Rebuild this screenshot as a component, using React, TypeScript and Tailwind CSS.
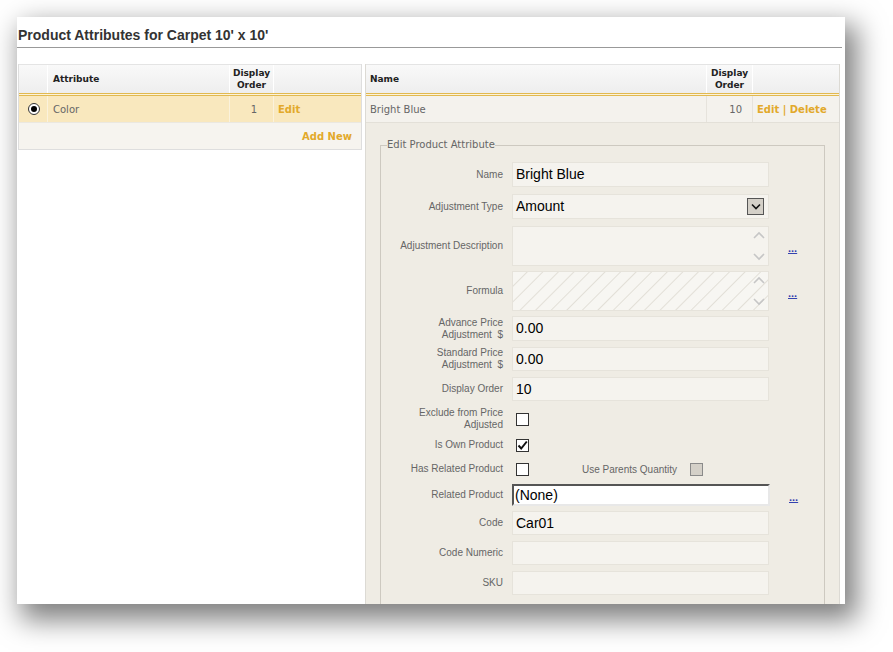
import React from "react";

const tableFont = "font-['DejaVu_Sans',Verdana,sans-serif]";
const formFont = "font-['Liberation_Sans',Arial,sans-serif]";

function Chevron({ dir }: { dir: "up" | "down" }) {
  return (
    <svg width="12" height="8" viewBox="0 0 12 8" fill="none" stroke="#c6c6c6" strokeWidth="1.6">
      {dir === "up" ? <path d="M1 7 L6 2 L11 7" /> : <path d="M1 1 L6 6 L11 1" />}
    </svg>
  );
}

function TextBox({ value, h = "h-[25px]" }: { value?: string; h?: string }) {
  return (
    <div
      className={`${h} w-[257px] bg-[#f5f3ee] border border-[#e6e3db] flex items-center pl-[3px] text-[14px] text-black ${formFont}`}
    >
      {value}
    </div>
  );
}

function TextArea({ hatched }: { hatched?: boolean }) {
  return (
    <div
      className={`h-[40px] w-[257px] border border-[#e6e3db] flex justify-end ${
        hatched
          ? "bg-[repeating-linear-gradient(135deg,#f7f6f2_0px,#f7f6f2_9px,#e2dfd7_10px,#f7f6f2_11px)]"
          : "bg-[#f5f3ee]"
      }`}
    >
      <div className="flex flex-col justify-between py-[4px] pr-[3px]">
        <Chevron dir="up" />
        <Chevron dir="down" />
      </div>
    </div>
  );
}

function Checkbox({ checked, disabled }: { checked?: boolean; disabled?: boolean }) {
  return (
    <div
      className={`w-[13px] h-[13px] border flex items-center justify-center ${
        disabled ? "bg-[#d4d0c8] border-[#8a8a8a]" : "bg-white border-[#333]"
      }`}
    >
      {checked && (
        <svg width="11" height="11" viewBox="0 0 11 11" fill="none" stroke="#111" strokeWidth="2">
          <path d="M1.5 5.5 L4.2 8.5 L9.8 1.5" />
        </svg>
      )}
    </div>
  );
}

function Dots() {
  return (
    <span className={`ml-[19px] mt-[4px] text-[11px] font-bold leading-none text-[#3443b0] underline ${formFont}`}>
      ...
    </span>
  );
}

function FormRow({
  label,
  mt,
  h,
  children,
  extra,
}: {
  label: React.ReactNode;
  mt: string;
  h: string;
  children: React.ReactNode;
  extra?: React.ReactNode;
}) {
  return (
    <div className={`flex items-center ${mt} ${h}`}>
      <div className={`w-[122px] text-right text-[10px] leading-[12px] text-[#666] ${formFont}`}>{label}</div>
      <div className="ml-[9px] flex items-center">{children}</div>
      {extra}
    </div>
  );
}

export default function App() {
  return (
    <div className="w-[893px] h-[652px] bg-white pt-[17px] pl-[17px]">
      <div className="w-[828px] h-[587px] bg-white overflow-hidden flex flex-col shadow-[8px_12px_26px_4px_rgba(0,0,0,0.5)]">
        {/* title */}
        <div className="h-[31px] shrink-0 mr-[3px] border-b border-[#999] flex items-end pb-[4px] pl-[1px]">
          <h1 className={`text-[14px] leading-[16px] font-bold text-[#333] ${formFont}`}>
            Product Attributes for Carpet 10' x 10'
          </h1>
        </div>

        <div className="flex mt-[16px] pl-[1px] gap-[3px] flex-1 min-h-0">
          {/* left: attributes */}
          <div className={`w-[344px] self-start border-x border-b border-[#dedede] ${tableFont}`}>
            <div className="h-[29px] grid grid-cols-[28px_182px_44px_1fr] bg-linear-to-b from-[#f9f9f9] to-[#eeeeee] border-t border-[#e4e4e4] text-[9px] font-bold text-[#222] leading-[12px]">
              <div />
              <div className="border-l border-white flex items-center pl-[5px]">Attribute</div>
              <div className="border-l border-white flex items-center justify-center text-center">
                Display
                <br />
                Order
              </div>
              <div className="border-l border-white" />
            </div>
            <div className="h-[3px] border-y border-[#e2b94f] bg-[#fbf3dc]" />
            <div className="h-[26px] grid grid-cols-[28px_182px_44px_1fr] bg-[#f9e8be] text-[10px] text-[#666]">
              <div className="flex items-center justify-center pl-[2px]">
                <div className="w-[12px] h-[12px] rounded-full border border-[#333] bg-white flex items-center justify-center">
                  <div className="w-[6px] h-[6px] rounded-full bg-black" />
                </div>
              </div>
              <div className="border-l border-[#fbf2dc] flex items-center pl-[5px]">Color</div>
              <div className="border-l border-[#fbf2dc] flex items-center justify-end pr-[16px]">1</div>
              <div className="border-l border-[#fbf2dc] flex items-center pl-[4px] font-bold text-[#e2a92b]">
                Edit
              </div>
            </div>
            <div className="h-[27px] bg-[#f6f4ef] border-t border-[#ebe8e0] flex items-center justify-end pr-[9px] text-[10px] font-bold text-[#e2a92b]">
              Add New
            </div>
          </div>

          {/* right: values */}
          <div className={`w-[475px] flex flex-col border-x border-[#dcdad4] ${tableFont}`}>
            <div className="h-[29px] shrink-0 grid grid-cols-[340px_46px_1fr] bg-linear-to-b from-[#f9f9f9] to-[#eeeeee] border-t border-[#e4e4e4] text-[9px] font-bold text-[#222] leading-[12px]">
              <div className="flex items-center pl-[4px]">Name</div>
              <div className="border-l border-white flex items-center justify-center text-center">
                Display
                <br />
                Order
              </div>
              <div className="border-l border-white" />
            </div>
            <div className="h-[3px] shrink-0 border-y border-[#e2b94f] bg-[#fbf3dc]" />
            <div className="h-[27px] shrink-0 grid grid-cols-[340px_46px_1fr] bg-[#f4f2ed] border-b border-[#e3e0d8] text-[10px] text-[#666]">
              <div className="flex items-center pl-[4px]">Bright Blue</div>
              <div className="border-l border-[#e6e3dc] flex items-center justify-end pr-[10px]">10</div>
              <div className="border-l border-[#e6e3dc] flex items-center pl-[4px] font-bold text-[#e2a92b]">
                Edit | Delete
              </div>
            </div>

            <div className="flex-1 min-h-0 bg-[#efece4] px-[14px] pt-[16px]">
              <fieldset className="border border-[#cdc9c0] pt-[11px] h-[480px]">
                <legend className={`ml-[6px] text-[10px] leading-[12px] text-[#666] ${tableFont}`}>
                  Edit Product Attribute
                </legend>

                <FormRow label="Name" mt="mt-0" h="h-[25px]">
                  <TextBox value="Bright Blue" />
                </FormRow>

                <FormRow label="Adjustment Type" mt="mt-[7px]" h="h-[25px]">
                  <div
                    className={`h-[25px] w-[257px] bg-[#f5f3ee] border border-[#e6e3db] flex items-center justify-between pl-[3px] pr-[4px] text-[14px] text-black ${formFont}`}
                  >
                    Amount
                    <div className="w-[17px] h-[17px] bg-[#d4d0c8] border border-[#555] flex items-center justify-center">
                      <svg width="10" height="7" viewBox="0 0 10 7" fill="none" stroke="#111" strokeWidth="1.6">
                        <path d="M1 1.5 L5 5.5 L9 1.5" />
                      </svg>
                    </div>
                  </div>
                </FormRow>

                <FormRow label="Adjustment Description" mt="mt-[7px]" h="h-[40px]" extra={<Dots />}>
                  <TextArea />
                </FormRow>

                <FormRow label="Formula" mt="mt-[5px]" h="h-[40px]" extra={<Dots />}>
                  <TextArea hatched />
                </FormRow>

                <FormRow
                  label={
                    <>
                      Advance Price
                      <br />
                      Adjustment&nbsp; $
                    </>
                  }
                  mt="mt-[5px]"
                  h="h-[25px]"
                >
                  <TextBox value="0.00" />
                </FormRow>

                <FormRow
                  label={
                    <>
                      Standard Price
                      <br />
                      Adjustment&nbsp; $
                    </>
                  }
                  mt="mt-[6px]"
                  h="h-[24px]"
                >
                  <TextBox value="0.00" h="h-[24px]" />
                </FormRow>

                <FormRow label="Display Order" mt="mt-[6px]" h="h-[24px]">
                  <TextBox value="10" h="h-[24px]" />
                </FormRow>

                <FormRow
                  label={
                    <>
                      Exclude from Price
                      <br />
                      Adjusted
                    </>
                  }
                  mt="mt-[5px]"
                  h="h-[26px]"
                >
                  <div className="pl-[4px]">
                    <Checkbox />
                  </div>
                </FormRow>

                <FormRow label="Is Own Product" mt="mt-[5px]" h="h-[16px]">
                  <div className="pl-[4px]">
                    <Checkbox checked />
                  </div>
                </FormRow>

                <FormRow label="Has Related Product" mt="mt-[8px]" h="h-[16px]">
                  <div className="pl-[4px] flex items-center">
                    <Checkbox />
                    <span className={`ml-[53px] text-[10px] text-[#666] ${formFont}`}>Use Parents Quantity</span>
                    <div className="ml-[13px]">
                      <Checkbox disabled />
                    </div>
                  </div>
                </FormRow>

                <FormRow label="Related Product" mt="mt-[7px]" h="h-[22px]" extra={<Dots />}>
                  <div
                    className={`h-[22px] w-[258px] bg-white border-2 border-t-[#555] border-l-[#555] border-b-[#e8e8e8] border-r-[#e8e8e8] flex items-center pl-[1px] text-[14px] text-black ${formFont}`}
                  >
                    (None)
                  </div>
                </FormRow>

                <FormRow label="Code" mt="mt-[5px]" h="h-[24px]">
                  <TextBox value="Car01" h="h-[24px]" />
                </FormRow>

                <FormRow label="Code Numeric" mt="mt-[6px]" h="h-[24px]">
                  <TextBox h="h-[24px]" />
                </FormRow>

                <FormRow label="SKU" mt="mt-[6px]" h="h-[24px]">
                  <TextBox h="h-[24px]" />
                </FormRow>
              </fieldset>
            </div>
          </div>
        </div>
      </div>
    </div>
  );
}
